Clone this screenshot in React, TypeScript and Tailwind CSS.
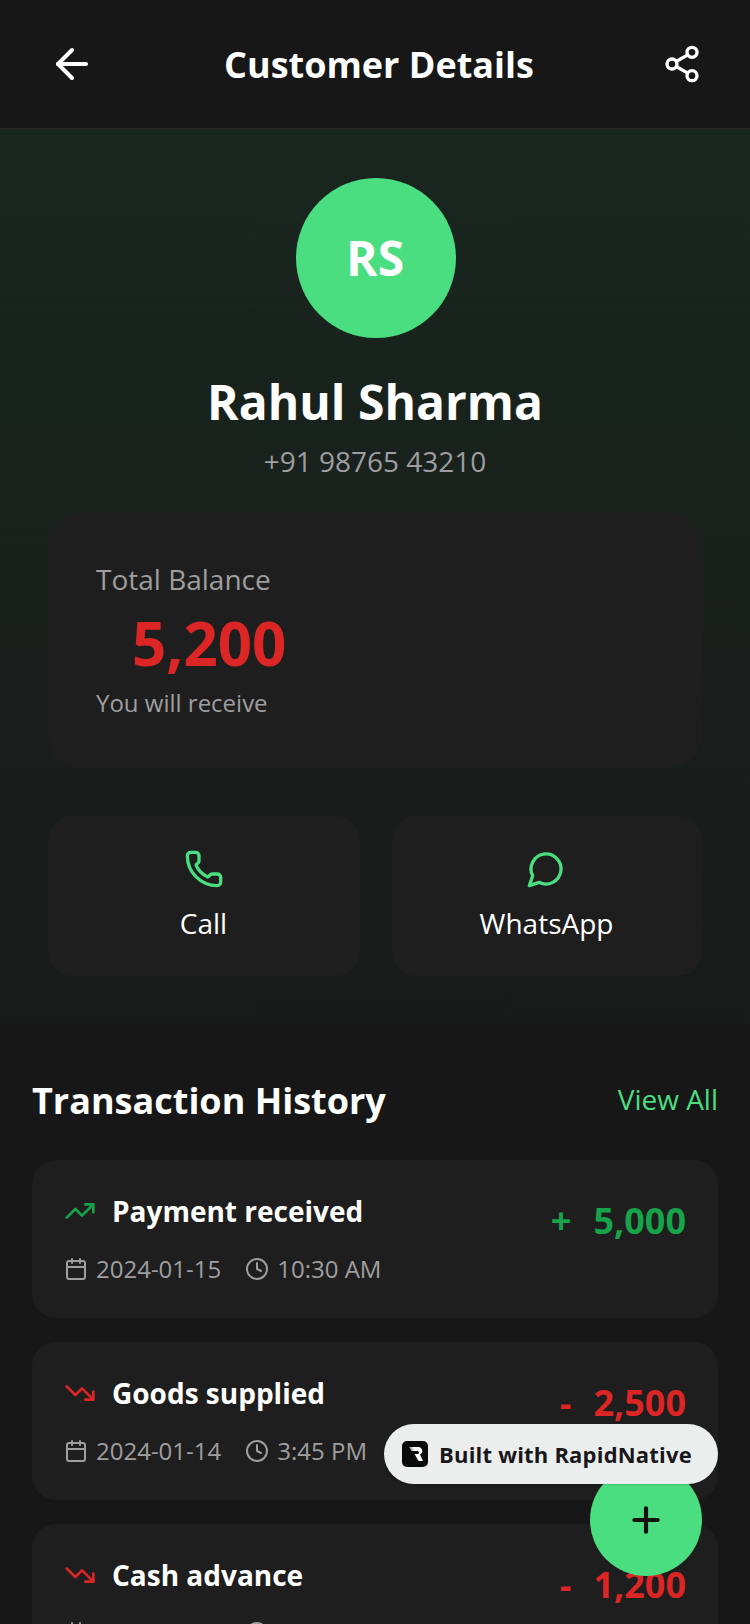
import { FC } from 'react';
import { ArrowLeft, Calendar, Clock, Phone, Plus, Share2, TrendingDown, TrendingUp } from 'lucide-react';

interface Txn {
  title: string;
  date: string;
  time: string;
  amount: string;
  credit: boolean;
}

const txns: Txn[] = [
  { title: 'Payment received', date: '2024-01-15', time: '10:30 AM', amount: '5,000', credit: true },
  { title: 'Goods supplied', date: '2024-01-14', time: '3:45 PM', amount: '2,500', credit: false },
  { title: 'Cash advance', date: '2024-01-12', time: '11:15 AM', amount: '1,200', credit: false },
];

const TxnCard: FC<{ txn: Txn }> = ({ txn }) => (
  <div className="flex h-[158px] shrink-0 items-start justify-between rounded-[24px] bg-[#1e1e1e] p-8">
    <div>
      <div className="flex h-[38px] items-center">
        {txn.credit ? (
          <TrendingUp size={32} strokeWidth={2} className="text-[#16a34a]" />
        ) : (
          <TrendingDown size={32} strokeWidth={2} className="text-[#dc2626]" />
        )}
        <span className="ml-4 text-[28px] font-bold leading-[38px] text-white">{txn.title}</span>
      </div>
      <div className="mt-[21px] flex h-[36px] items-center text-[24px] leading-[36px] text-[#9e9e9e]">
        <Calendar size={24} strokeWidth={2} />
        <span className="ml-2">{txn.date}</span>
        <Clock size={24} strokeWidth={2} className="ml-6" />
        <span className="ml-2">{txn.time}</span>
      </div>
    </div>
    <div
      className={`mt-[5px] flex items-center text-[36px] font-bold leading-[48px] ${
        txn.credit ? 'text-[#16a34a]' : 'text-[#dc2626]'
      }`}
    >
      <span className="mr-[22px]">{txn.credit ? '+' : '-'}</span>
      <span>{txn.amount}</span>
    </div>
  </div>
);

export default function App() {
  return (
    <div className="relative h-[1624px] w-[750px] overflow-hidden bg-[#171717] font-['Open_Sans','Noto_Sans',sans-serif]">
      <header className="flex h-[129px] items-center justify-between border-b border-[#262626] bg-[#171717] px-12">
        <ArrowLeft size={48} strokeWidth={2} className="text-white" />
        <h1 className="pt-[2px] text-[36px] font-bold text-white">Customer Details</h1>
        <Share2 size={40} strokeWidth={2} className="text-white" />
      </header>

      <section className="flex h-[895px] flex-col items-center bg-linear-to-b from-[#19261f] to-[#171a19] px-12 pt-[49px]">
        <div className="ml-[2px] flex size-40 items-center justify-center rounded-full bg-[#4ade80]">
          <span className="mr-[2px] text-[48px] font-bold text-white">RS</span>
        </div>
        <h2 className="mt-[28px] text-[48px] font-bold leading-[72px] text-white">Rahul Sharma</h2>
        <p className="mt-[2px] text-[28px] leading-[42px] text-[#9e9e9e]">+91 98765 43210</p>

        <div className="mt-[30px] h-[256px] w-full rounded-[32px] bg-[#1e1e1e] px-12 pt-[49px]">
          <p className="text-[28px] leading-[36px] text-[#9e9e9e]">Total Balance</p>
          <p className="mt-[4px] pl-[36px] text-[60px] font-bold leading-[84px] text-[#dc2626]">5,200</p>
          <p className="text-[24px] leading-[36px] text-[#9e9e9e]">You will receive</p>
        </div>

        <div className="mt-12 flex w-full gap-8">
          <div className="flex h-[160px] w-[312px] flex-col items-center justify-center rounded-[24px] bg-[#1e1e1e]">
            <Phone size={40} strokeWidth={2} className="text-[#4ade80]" />
            <span className="mr-[1px] mt-[13px] text-[28px] leading-[42px] text-white">Call</span>
          </div>
          <div className="flex h-[160px] flex-1 flex-col items-center justify-center rounded-[24px] bg-[#1e1e1e]">
            <svg
              width="40"
              height="40"
              viewBox="0 0 24 24"
              fill="none"
              stroke="currentColor"
              strokeWidth="2"
              strokeLinecap="round"
              strokeLinejoin="round"
              className="mr-[2px] text-[#4ade80]"
            >
              <path d="M7.9 20A9 9 0 1 0 4 16.1L2 22Z" />
            </svg>
            <span className="mr-[1px] mt-[13px] text-[28px] leading-[42px] text-white">WhatsApp</span>
          </div>
        </div>
      </section>

      <section className="px-8 pt-[48px]">
        <div className="flex items-center justify-between">
          <h3 className="pt-[2px] text-[36px] font-bold leading-[54px] text-white">Transaction History</h3>
          <span className="pb-[2px] text-[28px] leading-[42px] text-[#4ade80]">View All</span>
        </div>
        <div className="mt-[32px] flex flex-col gap-6">
          {txns.map((t) => (
            <TxnCard key={t.title} txn={t} />
          ))}
        </div>
      </section>

      {/* floating add button */}
      <div className="absolute left-[590px] top-[1464px] flex size-28 items-center justify-center rounded-full bg-[#4ade80]">
        <Plus size={40} strokeWidth={2.5} className="text-[#111111]" />
      </div>

      {/* platform badge */}
      <div className="absolute left-[384px] top-[1424px] flex h-[60px] w-[334px] items-center rounded-full bg-[#eceeee] pl-[18px] shadow-sm">
        <svg width="26" height="26" viewBox="0 0 26 26">
          <defs>
            <linearGradient id="logoFill" x1="0" y1="0.6" x2="1" y2="0.3">
              <stop offset="0.1" stopColor="#555" />
              <stop offset="0.45" stopColor="#fff" />
            </linearGradient>
          </defs>
          <rect width="26" height="26" rx="5" fill="#0b0b0b" />
          <path d="M7 6h9.5a4 4 0 0 1 1.5 7.6l3 6.4h-4.5l-4-7h3a1.4 1.4 0 0 0 0-3H9.5z" fill="url(#logoFill)" />
        </svg>
        <span className="ml-[11px] text-[22px] font-bold tracking-[0.2px] text-[#18181b]">Built with RapidNative</span>
      </div>
    </div>
  );
}
